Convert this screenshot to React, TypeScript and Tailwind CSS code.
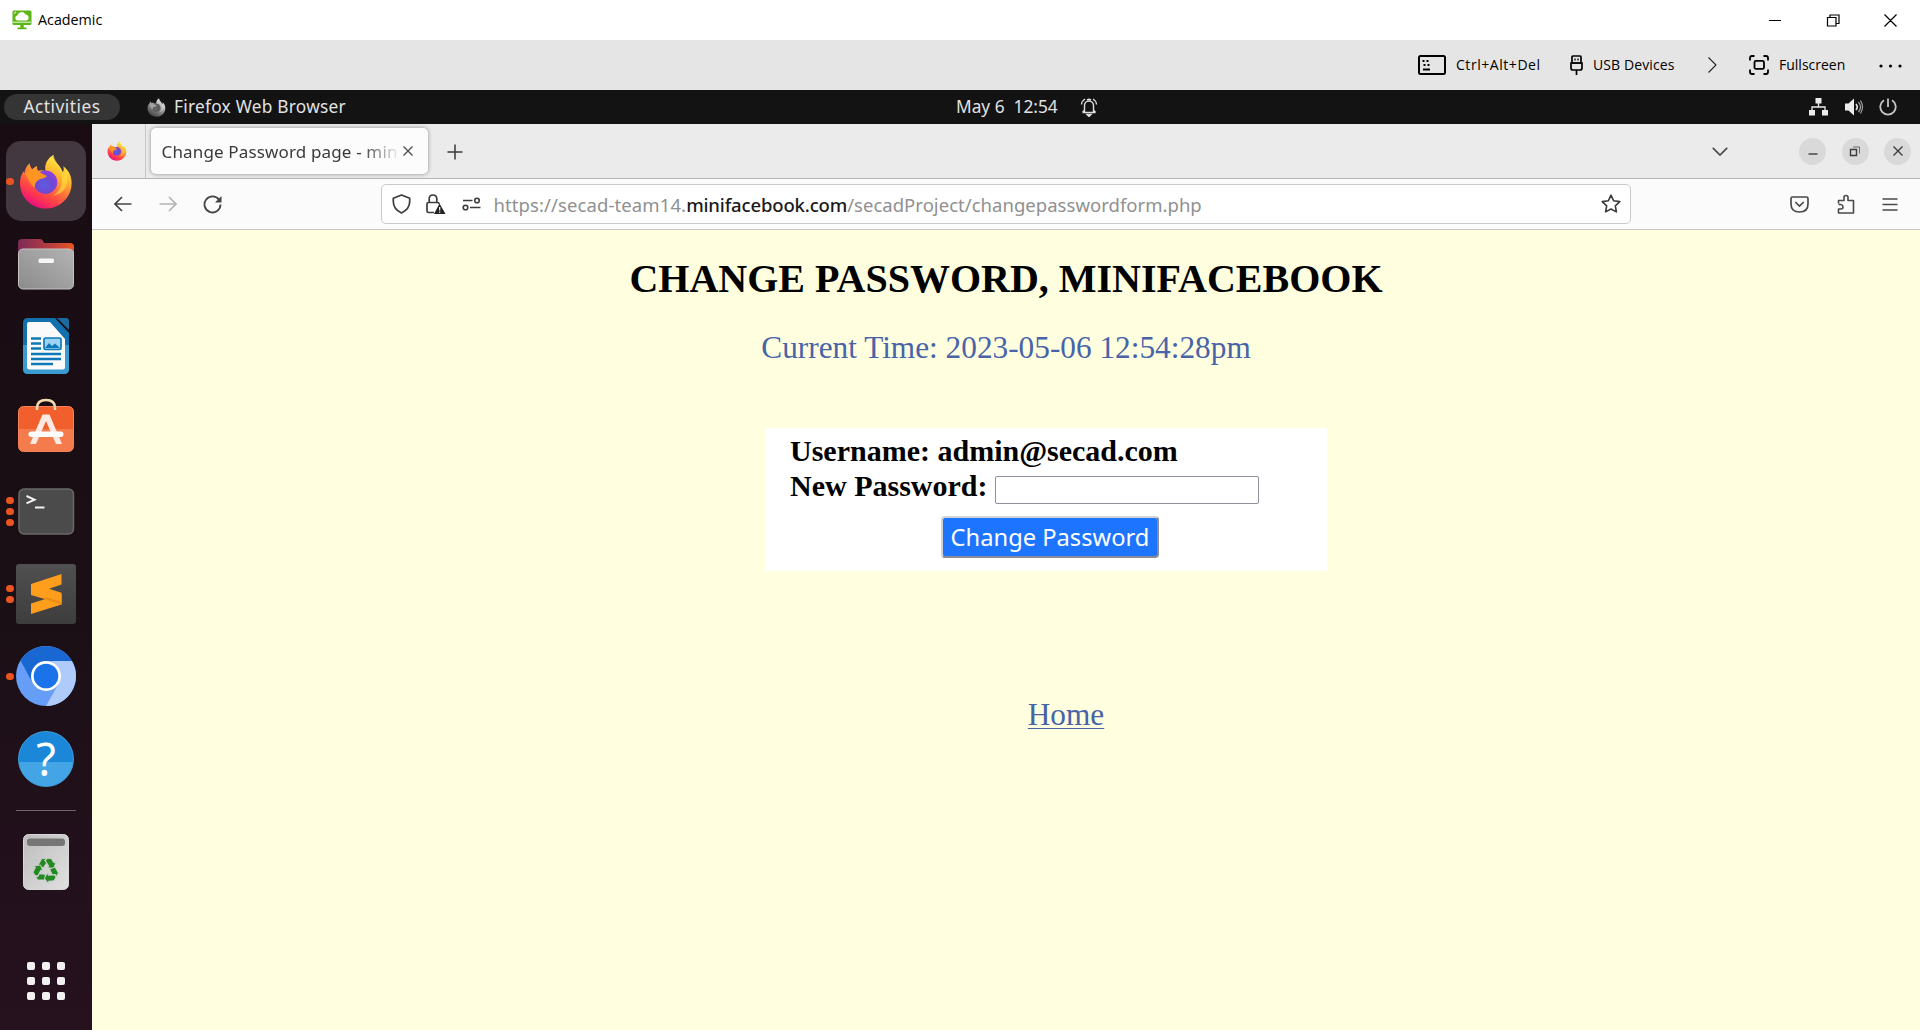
import React from "react";

function FirefoxLogo({ id, className }: { id: string; className: string }) {
  return (
    <svg viewBox="3 1 55 56" className={className}>
      <defs>
        <linearGradient id={`${id}-body`} x1="46" y1="6" x2="18" y2="54" gradientUnits="userSpaceOnUse">
          <stop offset="0" stopColor="#fff04a" />
          <stop offset="0.3" stopColor="#ffb52e" />
          <stop offset="0.55" stopColor="#ff7139" />
          <stop offset="0.78" stopColor="#ff3b4b" />
          <stop offset="1" stopColor="#e8117f" />
        </linearGradient>
        <radialGradient id={`${id}-globe`} cx="0.45" cy="0.6" r="0.6">
          <stop offset="0" stopColor="#5d5fe0" />
          <stop offset="0.6" stopColor="#6f47d4" />
          <stop offset="1" stopColor="#9340d8" />
        </radialGradient>
      </defs>
      <path
        fill={`url(#${id}-body)`}
        d="M14 10.5C14 13 15 15 16.500 16.500C18 15 20 14 21.500 13.300C21 15 21.500 17 22.500 18C25 17 27.500 17.500 30 18.500C28.500 12 32 5 38.300 1.700C37.500 6 40 8.500 43 12C45 14.500 46.500 16.500 47.500 19.500C49 18 48.800 15.500 48 13.500C53.500 17.500 56.600 23 56.600 30.500C56.600 45 45 56.500 30.300 56.500C15.500 56.500 4 45 4 30.700C4 26 5 22.500 7.500 18.500C8 19.500 8.300 20 8.500 20.500C9 16.500 11 13 14 10.500Z"
      />
      <path d="M38.300 1.700C37 8 42 11 45 17C49 26 47 38 38 43C49 42 55 32 51 19C50 21 49 22 48 23C46 13 39 9 38.300 1.700Z" fill="#ffdf3f" opacity="0.6" />
      <circle cx="30" cy="29.800" r="12" fill={`url(#${id}-globe)`} />
      <path d="M9 21C12 17 18 16 23 18.500C25 20.500 28 21.500 31.500 23.500C29.500 26.500 25 25.500 21.500 28.500C19.500 30.500 18.500 33 19 36C15 32 12 26 9 21Z" fill="#ff9420" />
    </svg>
  );
}

function Slot({ dots = 0, children }: { dots?: number; children: React.ReactNode }) {
  return (
    <div className="relative flex h-[82.5px] w-full shrink-0 items-center justify-center">
      {children}
      <div className="absolute inset-y-0 left-[6px] flex flex-col items-center justify-center gap-[3.5px]">
        {Array.from({ length: dots }, (_, i) => (
          <span key={i} className="h-[7.5px] w-[7.5px] rounded-full bg-[#e95420]" />
        ))}
      </div>
    </div>
  );
}

function Dock() {
  return (
    <aside className="flex w-[92px] shrink-0 flex-col items-center bg-linear-to-b from-[#190c13] via-[#1a0f15] to-[#26111f] pt-4">
      <Slot dots={1}>
        <div className="flex h-20 w-20 items-center justify-center rounded-[15px] bg-[#433840]">
          <FirefoxLogo id="dock-fx" className="h-[55px] w-[54px]" />
        </div>
      </Slot>
      <Slot>
        <svg viewBox="0 0 60 60" className="h-[60px] w-[60px]">
          <defs>
            <linearGradient id="folder-back" x1="0" x2="1"><stop offset="0" stopColor="#7d2a56" /><stop offset="0.5" stopColor="#b03a45" /><stop offset="1" stopColor="#ea5420" /></linearGradient>
            <linearGradient id="folder-front" x1="0" y1="1" x2="1" y2="0"><stop offset="0" stopColor="#8b8b8b" /><stop offset="1" stopColor="#b3b3b3" /></linearGradient>
          </defs>
          <path d="M6 5h18q2 0 3 2l1 2h26q4 0 4 4v20H2V9q0-4 4-4z" fill="url(#folder-back)" />
          <rect x="2.500" y="15" width="55" height="40" rx="4.500" fill="url(#folder-front)" stroke="#c4c4c4" />
          <rect x="22.500" y="24.500" width="15.500" height="4.500" rx="1.500" fill="#f5f5f5" />
        </svg>
      </Slot>
      <Slot>
        <svg viewBox="0 0 60 60" className="h-[60px] w-[60px]">
          <path d="M12 2h27l14 15v36q0 5-5 5H12q-5 0-5-5V7q0-5 5-5z" fill="#1271ac" />
          <path d="M7 29h46v24q0 5-5 5H12q-5 0-5-5z" fill="#3a9bd0" />
          <path d="M41 2h9q3 0 3 3v9z" fill="#1c6ba0" />
          <path d="M13 6h21l15 17v28q0 2.500-2.500 2.500h-33Q11 53.500 11 51V8q0-2 2-2z" fill="#fafafa" />
          <path d="M15 22.500h10M15 27.500h10M15 32.500h10M15 38h30M15 43h30M15 48h22" stroke="#0f79b8" strokeWidth="2.500" />
          <rect x="28" y="22" width="17" height="11.500" rx="1.500" fill="#9bd3f0" stroke="#0f79b8" strokeWidth="1.700" />
          <path d="M29 32l4-5 3 3 3-2.500 5 4.500z" fill="#0f79b8" />
        </svg>
      </Slot>
      <Slot>
        <svg viewBox="0 0 60 60" className="mb-[3px] h-[60px] w-[60px]">
          <rect x="2.500" y="9.500" width="55" height="45" rx="5" fill="#f05f2c" stroke="#f4835c" />
          <path d="M3 32h54v18q0 4-4 4H7q-4 0-4-4z" fill="#f47c4c" />
          <path d="M21 13v-2q0-8 9-8t9 8v2" fill="none" stroke="#f4dcae" strokeWidth="2.500" />
          <path d="M26.500 17.500h7L46 47h-6L30 24 20 47h-6z" fill="#fbe9e2" />
          <rect x="12.500" y="34.500" width="35" height="5.500" rx="2.700" fill="#fff" />
        </svg>
      </Slot>
      <Slot dots={3}>
        <svg viewBox="0 0 60 60" className="h-[60px] w-[60px]">
          <rect x="3" y="8" width="54.500" height="45" rx="5" fill="#4b4b4b" stroke="#696969" strokeWidth="1.500" />
          <path d="M10.500 15l8 3.700-8 3.700" fill="none" stroke="#f2f2f2" strokeWidth="2" />
          <path d="M19 26.500h9.500" stroke="#f2f2f2" strokeWidth="2" />
        </svg>
      </Slot>
      <Slot dots={2}>
        <svg viewBox="0 0 60 60" className="h-[60px] w-[60px]">
          <defs><linearGradient id="subl" x1="0" x2="0" y1="0" y2="1"><stop offset="0" stopColor="#505050" /><stop offset="1" stopColor="#3d3d3d" /></linearGradient></defs>
          <rect width="60" height="60" rx="3" fill="url(#subl)" />
          <path d="M15 39.500L45.500 30v10.500L15 50z" fill="#ff9d1c" />
          <path d="M15 20l30.500-10v10.500L33 24.800l12.500 4V40L15 31z" fill="#ff9d1c" />
          <path d="M27 34.600l4-1 14.500 5v1.800z" fill="#ea8a10" />
        </svg>
      </Slot>
      <Slot dots={1}>
        <svg viewBox="0 0 60 60" className="h-[60px] w-[60px]">
          <circle cx="30" cy="30" r="30" fill="#669df6" />
          <path d="M4.500 14.500A30 30 0 0 1 56 15H30L17.200 38z" fill="#1967d2" />
          <path d="M56 15A30 30 0 0 1 30 60L43 37 36 15z" fill="#aecbfa" />
          <circle cx="30" cy="30" r="15" fill="#fff" />
          <circle cx="30" cy="30" r="12.300" fill="#1a73e8" />
        </svg>
      </Slot>
      <Slot>
        <div className="flex h-14 w-14 items-center justify-center rounded-full border border-[#3f9fdc] bg-linear-to-b from-[#1b87d8] from-55% to-[#43a5e6] to-55%">
          <span className="font-['Noto_Sans',sans-serif] text-[45px] leading-none text-white">?</span>
        </div>
      </Slot>
      <div className="mt-[10px] h-px w-[60px] shrink-0 bg-[#6e666b]" />
      <div className="mt-[10px]">
        <Slot>
          <svg viewBox="0 0 60 60" className="h-[60px] w-[60px]">
            <defs><linearGradient id="bin" x1="0" x2="1" y1="0" y2="1"><stop offset="0" stopColor="#bdbdbd" /><stop offset="1" stopColor="#e0e0e0" /></linearGradient></defs>
            <rect x="7.500" y="2.500" width="45" height="55" rx="5" fill="url(#bin)" stroke="#d8d8d8" />
            <rect x="11" y="6.500" width="38" height="7.500" rx="3" fill="#767676" />
            <g fill="#218a21" stroke="#cfcfcf" strokeWidth="0.800">
              <path d="M22.500 32.500L26 26.500h5l-2.500 1.500 2 3L27 36zM31 26.500h4l3 4.500 2-1-2.500 6.500-6.500-1 2-1.200-3.500-5.500z" />
              <path d="M22.500 32.500L26 26.500h5l-2.500 1.500 2 3L27 36zM31 26.500h4l3 4.500 2-1-2.500 6.500-6.500-1 2-1.200-3.500-5.500z" transform="rotate(120 30 38.500)" />
              <path d="M22.500 32.500L26 26.500h5l-2.500 1.500 2 3L27 36zM31 26.500h4l3 4.500 2-1-2.500 6.500-6.500-1 2-1.200-3.500-5.500z" transform="rotate(240 30 38.500)" />
            </g>
          </svg>
        </Slot>
      </div>
      <div className="mt-[58px] grid grid-cols-3 gap-[7px]">
        {Array.from({ length: 9 }, (_, i) => (
          <span key={i} className="h-2 w-2 rounded-[2px] bg-[#f2f0f1]" />
        ))}
      </div>
    </aside>
  );
}

function TitleBar() {
  return (
    <header className="flex h-10 shrink-0 items-center bg-white pl-[12px] font-['Open_Sans',sans-serif] text-black">
      <svg viewBox="0 0 20 20" className="h-5 w-5">
        <rect x="0.500" y="0.500" width="19" height="14.500" rx="1.500" fill="#5cb615" />
        <path d="M5.500 11a2.600 2.600 0 0 1-.3-5.100A4.500 4.500 0 0 1 13.500 5a3.200 3.200 0 0 1 1.500 6z" fill="#fff" transform="translate(0 -.5)" />
        <path d="M1 12.200h18" stroke="#fff" strokeWidth="0.900" />
        <path d="M2 3.500L4 2" stroke="#d6efc0" strokeWidth="1.200" />
        <path d="M8.300 15h3.400v2.500h2.800v1.700h-9v-1.700h2.800z" fill="#5cb615" />
      </svg>
      <span className="ml-[6px] text-[14.3px] leading-5 whitespace-nowrap">Academic</span>
      <svg viewBox="0 0 130 14" className="mr-[22px] ml-auto h-[14px] w-[130px]" fill="none" stroke="#000" strokeWidth="1.200">
        <path d="M1 7.500h12M59.500 4.500h8.500v8.500h-8.500zM62 4.500V2h9v8.500h-3M116.500 1.500l12 12M128.500 1.500l-12 12" />
      </svg>
    </header>
  );
}

function SessionBar() {
  return (
    <div className="flex h-[50px] shrink-0 items-center bg-[#e5e5e5] pl-[1418px] font-['Open_Sans',sans-serif] text-[14px] text-black">
      <svg viewBox="0 0 28 20" className="h-5 w-7 shrink-0">
        <rect x="1" y="1" width="26" height="18" rx="1.500" fill="none" stroke="#000" strokeWidth="2" />
        <path d="M4.500 6h2M8.500 6h2M5.500 10h2M9.500 10h2M5 14.500h7" stroke="#000" strokeWidth="2" />
      </svg>
      <div className="mb-[2px] ml-[10px] w-[114px] tracking-[0.55px] whitespace-nowrap">Ctrl+Alt+Del</div>
      <svg viewBox="0 0 13 20" className="h-5 w-[13px] shrink-0" fill="none" stroke="#000" strokeWidth="1.700">
        <rect x="2" y="1" width="9" height="7" rx="1" />
        <path d="M1 8h11v5q0 2-2 2H3q-2 0-2-2zM6.500 15v5" />
        <path d="M5 3.500v2M8 3.500v2" strokeWidth="1.300" />
      </svg>
      <div className="mb-[2px] ml-[10px] w-[115px] tracking-[0.1px] whitespace-nowrap">USB Devices</div>
      <svg viewBox="0 0 9 16" className="h-4 w-[9px] shrink-0" fill="none" stroke="#222" strokeWidth="1.100"><path d="M.5.500L8 8 .5 15.500" /></svg>
      <svg viewBox="0 0 20 20" className="ml-[32px] h-5 w-5 shrink-0" fill="none" stroke="#000" strokeWidth="1.800">
        <path d="M1 5.500V3q0-2 2-2h2.500M14.500 1H17q2 0 2 2v2.500M19 14.500V17q0 2-2 2h-2.500M5.500 19H3q-2 0-2-2v-2.500" />
        <rect x="5.500" y="5.900" width="9.500" height="8" rx="1.500" />
      </svg>
      <div className="mb-[2px] ml-[10px] w-[100px] whitespace-nowrap">Fullscreen</div>
      <svg viewBox="0 0 23 4" className="mt-[2px] h-1 w-[23px] shrink-0"><circle cx="2" cy="2" r="1.600" /><circle cx="11.500" cy="2" r="1.600" /><circle cx="21" cy="2" r="1.600" /></svg>
    </div>
  );
}

function GnomeBar() {
  return (
    <div className="flex h-[34px] shrink-0 items-center bg-[#131313] pl-1 font-['Noto_Sans',sans-serif] text-[17.3px] text-[#e2e2e2]">
      <div className="flex h-[26px] w-[116px] items-center justify-center rounded-full bg-[#353535] tracking-[0.5px]">Activities</div>
      <FirefoxLogo id="bar-fx" className="ml-[27px] h-[19px] w-[19px] grayscale" />
      <div className="ml-2 w-[782px] tracking-[0.25px] whitespace-nowrap">Firefox Web Browser</div>
      <div className="w-[124px] text-[17.3px] whitespace-pre">May 6  12:54</div>
      <svg viewBox="0 0 18 20" className="h-5 w-[18px]" fill="none" stroke="#dedede" strokeWidth="1.400">
        <path d="M2.500 15.500h13M4.500 15V8.500a4.500 4.500 0 0 1 9 0V15M2.500 15.500l2-2.500M15.500 15.500l-2-2.500M1.500 7.500A7 7 0 0 1 5 2M16.500 7.500A7 7 0 0 0 13 2M7 3q2-1.500 4 0" />
        <path d="M7 17.500h4l-2 2z" fill="#dedede" />
      </svg>
      <div className="ml-auto flex items-center pr-[23px]">
        <svg viewBox="0 0 19 18" className="h-[18px] w-[19px]" fill="#ececec"><path d="M6.500 0h6v5.500h-6zM0 12h6v5.500H0zM13 12h6v5.500h-6z" /><path d="M9.500 5v4M3 12V9h13v3" fill="none" stroke="#ececec" strokeWidth="1.300" /></svg>
        <svg viewBox="0 0 19 18" className="ml-[17px] h-[18px] w-[19px]" fill="none" stroke="#dedede" strokeWidth="1.300"><path d="M0 5.500h3.500L9 .5v17l-5.500-5H0z" fill="#ececec" stroke="none" /><path d="M11 6q2.500 3 0 6" strokeWidth="1.700" /><path d="M13.500 4q4 5 0 10M15.500 2.500q4 6.500 0 13" opacity="0.650" /></svg>
        <svg viewBox="0 0 18 18" className="ml-[15px] h-[18px] w-[18px]" fill="none" stroke="#c4c4c4" strokeWidth="1.800"><path d="M5 2.300a7.700 7.700 0 1 0 8 0M9 .5v8.500" /></svg>
      </div>
    </div>
  );
}

function RoundButton({ children }: { children: React.ReactNode }) {
  return (
    <div className="flex h-[27px] w-[27px] items-center justify-center rounded-full bg-[#d9d9d9]">
      <svg viewBox="0 0 12 12" className="h-3 w-3" fill="none" stroke="#3d3d3d" strokeWidth="1.400">{children}</svg>
    </div>
  );
}

function TabStrip() {
  return (
    <div className="flex h-[55px] shrink-0 items-center border-b border-[#b4b4b4] bg-[#ebebeb] font-['Noto_Sans',sans-serif]">
      <div className="flex h-full w-[54px] items-center justify-center border-r border-[#c6c6c6]">
        <FirefoxLogo id="tab-fx" className="-ml-[3px] h-5 w-5" />
      </div>
      <div className="ml-[5px] flex h-[46px] w-[277px] items-center rounded-[5px] bg-[#fcfcfc] pl-[10.5px] shadow-[0_0_4px_rgba(0,0,0,0.4)]">
        <div className="mt-[2px] w-[237px] overflow-hidden text-[17px] tracking-[0.15px] whitespace-nowrap text-[#3a3a3a] mask-[linear-gradient(to_right,black_84%,transparent_101%)]">Change Password page - min</div>
        <svg viewBox="0 0 10 10" className="ml-[4px] h-[10px] w-[10px]" fill="none" stroke="#4a4a4a" strokeWidth="1.300"><path d="M.5.500l9 9M9.500.5l-9 9" /></svg>
      </div>
      <svg viewBox="0 0 16 16" className="mt-px ml-[19px] h-4 w-4" fill="none" stroke="#3a3a3a" strokeWidth="1.500"><path d="M8 .5v15M.5 8h15" /></svg>
      <svg viewBox="0 0 16 9" className="ml-auto h-[9px] w-4" fill="none" stroke="#4a4a4a" strokeWidth="1.700"><path d="M.8.800L8 8 15.200.8" /></svg>
      <div className="ml-[71px] flex gap-[15.5px] pr-[9px]">
        <RoundButton><path d="M1.500 9h9" /></RoundButton>
        <RoundButton><path d="M1.500 4.500h6v6h-6z" /><path d="M4 2h6.500V8.500" strokeWidth="1" opacity="0.700" /></RoundButton>
        <RoundButton><path d="M1.500 1.500l9 9M10.500 1.500l-9 9" /></RoundButton>
      </div>
    </div>
  );
}

function NavBar() {
  return (
    <div className="flex h-[51px] shrink-0 items-center border-b border-[#c8c8c8] bg-[#fbfbfb] pl-[22px]">
      <svg viewBox="0 0 18 16" className="h-4 w-[18px]" fill="none" stroke="#454545" strokeWidth="1.700"><path d="M17.500 8H1M8 1L1 8l7 7" /></svg>
      <svg viewBox="0 0 18 16" className="ml-[27px] h-4 w-[18px]" fill="none" stroke="#b4b4b4" strokeWidth="1.700"><path d="M.5 8H17M10 1l7 7-7 7" /></svg>
      <svg viewBox="0 0 19 19" className="ml-[26px] h-[19px] w-[19px]" fill="none" stroke="#454545" strokeWidth="1.800"><path d="M16 4.800A8 8 0 1 0 17.500 9.500" /><path d="M18.500 1v6.500H12z" fill="#454545" stroke="none" /></svg>
      <div className="ml-[159px] flex h-[40px] w-[1250px] items-center rounded-[5px] border border-[#c9c9c9] bg-white pl-[10px]">
        <svg viewBox="0 0 19 20" className="h-5 w-[19px]" fill="none" stroke="#3c3c3c" strokeWidth="1.700" strokeLinejoin="round"><path d="M9.500 1l8.200 3.200v3.300q0 7.500-8.200 11.500Q1.300 15 1.300 7.500V4.200z" /></svg>
        <svg viewBox="0 0 20 20" className="ml-[15px] h-5 w-5" fill="none" stroke="#3c3c3c" strokeWidth="1.700"><path d="M8 18.500H2.500q-1.500 0-1.500-1.500V10q0-1.500 1.500-1.500h9q1.500 0 1.500 1.500M3.200 8.500V5q0-4 3.800-4t3.800 4v3.500" /><path d="M13.500 9.500l6 10.500H8z" fill="#222" stroke="none" /><path d="M13.700 13v3.500M13.700 17.500v1.300" stroke="#fff" strokeWidth="1.200" /></svg>
        <svg viewBox="0 0 19 14" className="ml-[16px] h-[14px] w-[19px]" fill="none" stroke="#3c3c3c" strokeWidth="1.600"><path d="M1 3.500h9.500M8 10.500h10.500" /><circle cx="15" cy="3.500" r="2.300" /><circle cx="3.500" cy="10.500" r="2.300" /></svg>
        <div className="mt-px ml-[12.5px] font-['Noto_Sans',sans-serif] text-[18.5px] whitespace-nowrap text-[#909090]">
          <span className="tracking-[0.1px]">https://secad-team14.</span>
          <span className="font-medium tracking-[-0.15px] text-[#1a1a1a]">minifacebook.com</span>
          <span className="tracking-[0.03px]">/secadProject/changepasswordform.php</span>
        </div>
        <svg viewBox="0 0 20 20" className="mr-[9px] ml-auto h-5 w-5" fill="none" stroke="#3c3c3c" strokeWidth="1.600" strokeLinejoin="round"><path d="M10 1.200l2.700 5.600 6.100.8-4.500 4.200 1.100 6.100L10 15l-5.400 2.900 1.100-6.100L1.200 7.600l6.100-.8z" /></svg>
      </div>
      <svg viewBox="0 0 19 17" className="ml-[159px] h-[17px] w-[19px]" fill="none" stroke="#4a4a4a" strokeWidth="1.700"><path d="M2.500 1h14q1.500 0 1.500 1.500V8q0 8-8.500 8T1 8V2.500Q1 1 2.500 1zM5.300 6l4.200 4 4.200-4" /></svg>
      <svg viewBox="0 0 18 20" className="ml-[28px] h-5 w-[18px]" fill="none" stroke="#4a4a4a" strokeWidth="1.600" strokeLinejoin="round"><path d="M1.500 9.500V6.500h5.500V3.500q0-2 2-2t2 2v3h5.500v12.500h-15v-4h2.500q2 0 2-2t-2-2.500H1.500" /></svg>
      <svg viewBox="0 0 16 13" className="ml-[27px] h-[13px] w-4" stroke="#4a4a4a" strokeWidth="1.500"><path d="M.5 1h15M.5 6.500h15M.5 12h15" /></svg>
    </div>
  );
}

function PageContent() {
  return (
    <main className="flex min-h-0 flex-1 flex-col items-center bg-[#ffffe0] font-['Liberation_Serif',serif]">
      <h1 className="mt-[26px] text-[40px] leading-[46px] font-bold whitespace-nowrap text-black">CHANGE PASSWORD, MINIFACEBOOK</h1>
      <p className="mt-[28px] text-[31.3px] leading-9 whitespace-nowrap text-[#4863a8]">Current Time: 2023-05-06 12:54:28pm</p>
      <form className="mt-[62px] ml-20 flex h-[143px] w-[562px] flex-col bg-white pt-[5px] pl-[25px] text-[30px] leading-[35px] font-bold text-black">
        <div className="whitespace-nowrap">Username: admin@secad.com</div>
        <label className="flex whitespace-nowrap">
          <span className="w-[205px]">New Password:</span>
          <input type="password" className="mt-[8px] h-[28px] w-[264px] rounded-[2px] border border-[#8f8f9d] bg-white" />
        </label>
        <button type="button" className="mt-[12px] ml-[151px] flex h-[42px] w-[218px] items-center justify-center rounded-[4px] border-2 border-t-[#d3d3d3] border-r-[#8a8a92] border-b-[#8a8a92] border-l-[#d3d3d3] bg-[#1c74ff] pt-[2px] font-['Noto_Sans',sans-serif] text-[23.7px] leading-none font-normal whitespace-nowrap text-white">
          Change Password
        </button>
      </form>
      <a className="mt-[126px] ml-[120px] text-[31.3px] leading-9 text-[#4863a8] underline decoration-1 underline-offset-[3px]">Home</a>
    </main>
  );
}

export default function App() {
  return (
    <div className="flex h-[1030px] w-[1920px] flex-col overflow-hidden">
      <TitleBar />
      <SessionBar />
      <GnomeBar />
      <div className="flex min-h-0 flex-1">
        <Dock />
        <div className="flex min-w-0 flex-1 flex-col">
          <TabStrip />
          <NavBar />
          <PageContent />
        </div>
      </div>
    </div>
  );
}
